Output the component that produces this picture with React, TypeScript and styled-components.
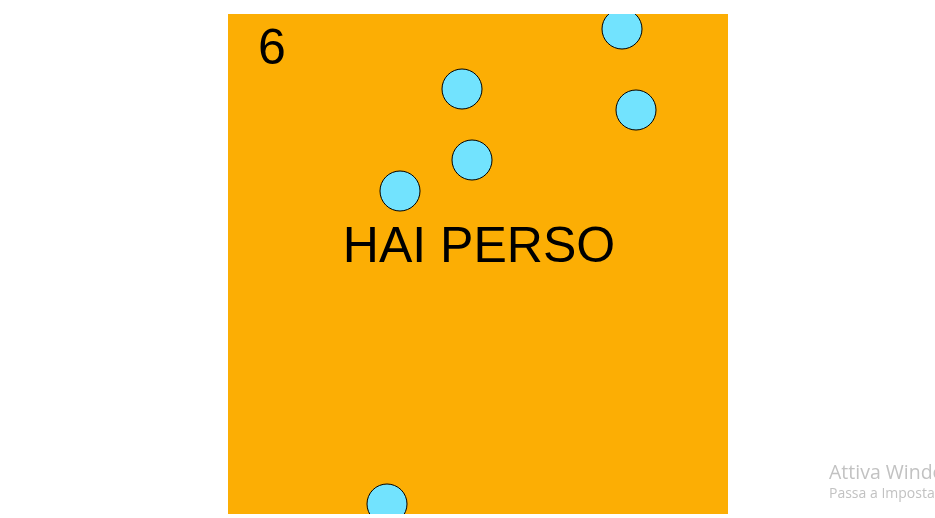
import React from 'react';
import styled, { createGlobalStyle } from 'styled-components';

const GlobalStyle = createGlobalStyle`
	html, body {
		margin: 0;
		padding: 0;
		background: #ffffff;
		overflow: hidden;
	}
`;

const Page = styled.div`
	width: 935px;
	height: 518px;
	padding: 14px 0 0 228px;
	box-sizing: border-box;
`;

const Board = styled.div`
	position: relative;
	width: 500px;
	height: 500px;
	background: #fcae04;
	overflow: hidden;
	display: flex;
	flex-direction: column;
	font-family: 'Liberation Sans', Arial, sans-serif;
	color: #000000;
`;

const Score = styled.div`
	margin: 8px 0 0 30px;
	font-size: 50px;
	line-height: 50px;
`;

const Message = styled.div`
	margin-top: 148px;
	padding-left: 2px;
	font-size: 50px;
	line-height: 50px;
	text-align: center;
`;

const Ball = styled.div`
	position: absolute;
	width: 41px;
	height: 41px;
	box-sizing: border-box;
	border: 1px solid #000000;
	border-radius: 50%;
	background: #72e3fe;
	transform: translate(-50%, -50%);
`;

const Watermark = styled.div`
	position: fixed;
	left: 829px;
	top: 459px;
	white-space: nowrap;
	font-family: 'Open Sans', 'Noto Sans', sans-serif;
	color: #c2c2c2;
`;

const WatermarkTitle = styled.div`
	font-size: 19.5px;
	line-height: 25px;
`;

const WatermarkHint = styled.div`
	font-size: 14px;
	line-height: 18px;
`;

// ball centres in board coordinates
const balls = [
	{ x: 394, y: 15 },
	{ x: 408, y: 96 },
	{ x: 234, y: 75 },
	{ x: 244, y: 146 },
	{ x: 172, y: 177 },
	{ x: 159, y: 490 },
];

export default function App() {
	return (
		<>
			<GlobalStyle />
			<Page>
				<Board>
					<Score>6</Score>
					<Message>HAI PERSO</Message>
					{balls.map((b, i) => (
						<Ball key={i} style={{ left: b.x, top: b.y }} />
					))}
				</Board>
			</Page>
			<Watermark>
				<WatermarkTitle>Attiva Windows</WatermarkTitle>
				<WatermarkHint>Passa a Impostazioni per attivare Windows.</WatermarkHint>
			</Watermark>
		</>
	);
}
